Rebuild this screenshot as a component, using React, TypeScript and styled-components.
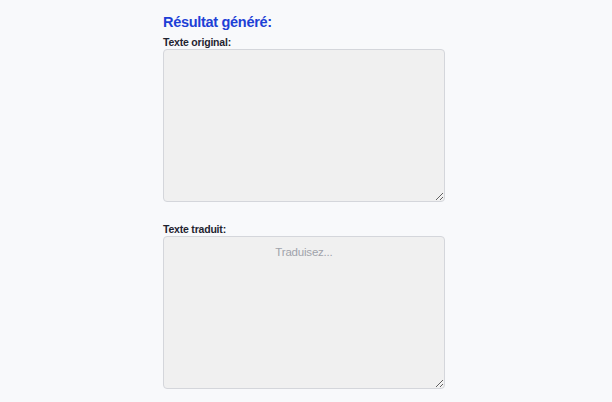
import React from "react";
import styled, { createGlobalStyle } from "styled-components";

const Global = createGlobalStyle`
  html, body { margin: 0; padding: 0; background: #f8f9fb; }
  body { font-family: "Liberation Sans", Arial, sans-serif; }
`;

const Container = styled.div`
  width: 286px;
  margin: 0 auto;
  padding-top: 13px;
  display: flex;
  flex-direction: column;
`;

const Title = styled.h2`
  margin: 0 0 4px;
  font-size: 14.5px;
  letter-spacing: -0.3px;
  line-height: 19px;
  font-weight: 700;
  color: #1d40d6;
`;

const Field = styled.div<{ $gap?: number }>`
  display: flex;
  flex-direction: column;
  margin-top: ${(p) => p.$gap ?? 0}px;
`;

const Label = styled.label`
  font-size: 10.5px;
  letter-spacing: -0.2px;
  line-height: 13px;
  font-weight: 700;
  color: #1f2430;
`;

const Area = styled.textarea`
  box-sizing: border-box;
  width: 282px;
  height: 153px;
  margin: 0;
  padding: 8px;
  border: 1px solid #d4d6db;
  border-radius: 4px;
  background: #f0f0f0;
  font-family: "Liberation Sans", Arial, sans-serif;
  font-size: 11.5px;
  letter-spacing: -0.2px;
  line-height: 14px;
  text-align: center;
  color: #333;
  resize: both;
  outline: none;
  &::placeholder { color: #a0a3ab; }
`;

export default function App() {
  return (
    <>
      <Global />
      <Container>
        <Title>Résultat généré:</Title>
        <Field>
          <Label>Texte original:</Label>
          <Area />
        </Field>
        <Field $gap={21}>
          <Label>Texte traduit:</Label>
          <Area placeholder="Traduisez..." />
        </Field>
      </Container>
    </>
  );
}
